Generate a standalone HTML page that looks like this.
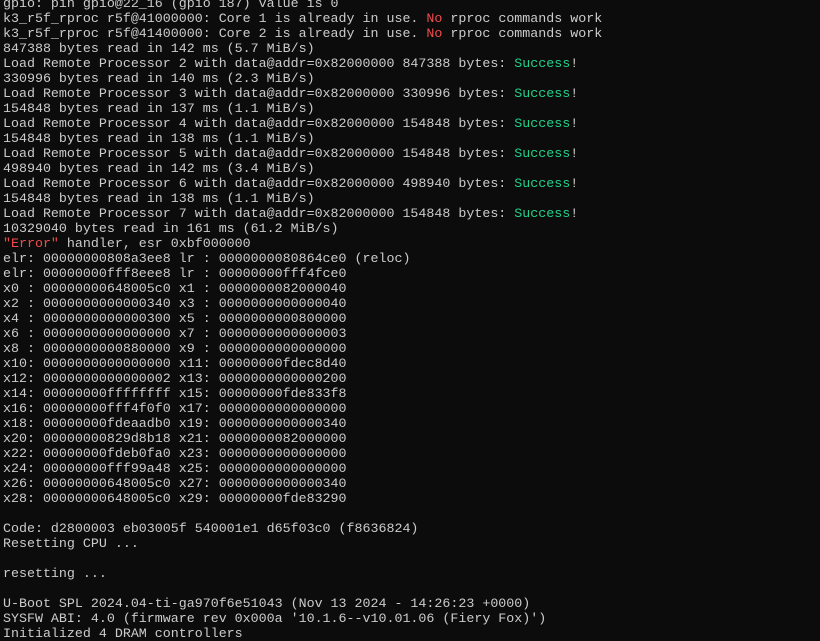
<!DOCTYPE html>
<html><head><meta charset="utf-8"><style>
html,body{margin:0;padding:0;background:#0c0c0c;width:820px;height:640px;overflow:hidden}
pre{margin:0;position:absolute;left:3px;top:-4px;font-family:"Liberation Mono",monospace;font-size:13.32px;line-height:15px;color:#cccccc;white-space:pre}
.r{color:#f14c4c}.g{color:#23d18b}
</style></head><body><pre>gpio: pin gpio@22_16 (gpio 187) value is 0
k3_r5f_rproc r5f@41000000: Core 1 is already in use. <span class="r">No</span> rproc commands work
k3_r5f_rproc r5f@41400000: Core 2 is already in use. <span class="r">No</span> rproc commands work
847388 bytes read in 142 ms (5.7 MiB/s)
Load Remote Processor 2 with data@addr=0x82000000 847388 bytes: <span class="g">Success</span>!
330996 bytes read in 140 ms (2.3 MiB/s)
Load Remote Processor 3 with data@addr=0x82000000 330996 bytes: <span class="g">Success</span>!
154848 bytes read in 137 ms (1.1 MiB/s)
Load Remote Processor 4 with data@addr=0x82000000 154848 bytes: <span class="g">Success</span>!
154848 bytes read in 138 ms (1.1 MiB/s)
Load Remote Processor 5 with data@addr=0x82000000 154848 bytes: <span class="g">Success</span>!
498940 bytes read in 142 ms (3.4 MiB/s)
Load Remote Processor 6 with data@addr=0x82000000 498940 bytes: <span class="g">Success</span>!
154848 bytes read in 138 ms (1.1 MiB/s)
Load Remote Processor 7 with data@addr=0x82000000 154848 bytes: <span class="g">Success</span>!
10329040 bytes read in 161 ms (61.2 MiB/s)
<span class="r">"Error"</span> handler, esr 0xbf000000
elr: 00000000808a3ee8 lr : 0000000080864ce0 (reloc)
elr: 00000000fff8eee8 lr : 00000000fff4fce0
x0 : 00000000648005c0 x1 : 0000000082000040
x2 : 0000000000000340 x3 : 0000000000000040
x4 : 0000000000000300 x5 : 0000000000800000
x6 : 0000000000000000 x7 : 0000000000000003
x8 : 0000000000880000 x9 : 0000000000000000
x10: 0000000000000000 x11: 00000000fdec8d40
x12: 0000000000000002 x13: 0000000000000200
x14: 00000000ffffffff x15: 00000000fde833f8
x16: 00000000fff4f0f0 x17: 0000000000000000
x18: 00000000fdeaadb0 x19: 0000000000000340
x20: 00000000829d8b18 x21: 0000000082000000
x22: 00000000fdeb0fa0 x23: 0000000000000000
x24: 00000000fff99a48 x25: 0000000000000000
x26: 00000000648005c0 x27: 0000000000000340
x28: 00000000648005c0 x29: 00000000fde83290

Code: d2800003 eb03005f 540001e1 d65f03c0 (f8636824)
Resetting CPU ...

resetting ...

U-Boot SPL 2024.04-ti-ga970f6e51043 (Nov 13 2024 - 14:26:23 +0000)
SYSFW ABI: 4.0 (firmware rev 0x000a '10.1.6--v10.01.06 (Fiery Fox)')
Initialized 4 DRAM controllers</pre></body></html>
